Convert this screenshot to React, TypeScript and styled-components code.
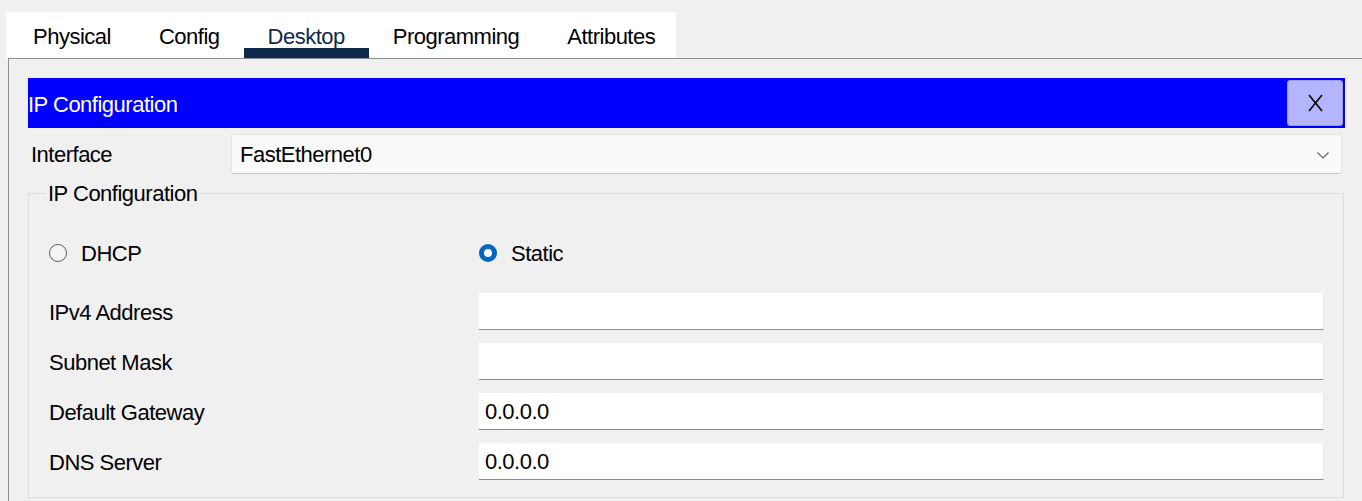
import React from 'react';
import styled, { createGlobalStyle } from 'styled-components';

const GlobalStyle = createGlobalStyle`
    html, body {
        margin: 0;
        padding: 0;
        background: #f0f0f0;
        overflow: hidden;
    }
    body {
        font-family: "Liberation Sans", Arial, sans-serif;
        font-size: 22px;
        letter-spacing: -0.5px;
        color: #000;
    }
`;

const Page = styled.div`
    padding-top: 12px;
    width: 1362px;
    height: 501px;
    box-sizing: border-box;
`;

const TabStrip = styled.div`
    display: flex;
    margin-left: 6px;
    padding-left: 3px;
    width: 667px;
    height: 46px;
    background: #ffffff;
`;

const Tab = styled.div<{ $active?: boolean }>`
    display: flex;
    align-items: center;
    padding: 3px 24px 0;
    height: 100%;
    box-sizing: border-box;
    color: ${(p) => (p.$active ? '#0d2a4c' : '#000')};
    box-shadow: ${(p) => (p.$active ? 'inset 0 -10px 0 #0d2a4c' : 'none')};
    white-space: nowrap;
`;

const Panel = styled.div`
    margin-left: 8px;
    width: 1356px;
    height: 460px;
    box-sizing: border-box;
    border-top: 1px solid #8c8c94;
    border-left: 1px solid #8c8c94;
    padding: 19px 19px 0 19px;
`;

const TitleBar = styled.div`
    display: flex;
    align-items: center;
    justify-content: space-between;
    height: 50px;
    background: #0000ff;
    color: #fff;
    padding: 0 2px 0 0;
`;

const TitleText = styled.span`
    padding-top: 3px;
`;

const CloseButton = styled.div`
    display: flex;
    align-items: center;
    justify-content: center;
    width: 56px;
    height: 46px;
    box-sizing: border-box;
    background: #b4b4ff;
    border: 1px solid #9c9cf0;
    border-radius: 3px;
`;

const InterfaceRow = styled.div`
    display: flex;
    align-items: center;
    margin-top: 6px;
    padding: 0 3px;
`;

const InterfaceLabel = styled.div`
    width: 200px;
    flex-shrink: 0;
    padding-top: 2px;
`;

const Dropdown = styled.div`
    flex: 1;
    display: flex;
    align-items: center;
    justify-content: space-between;
    height: 40px;
    box-sizing: border-box;
    padding: 2px 12px 0 8px;
    background: #fafafa;
    border: 1px solid #e4e4e4;
    border-bottom-color: #c8c8c8;
    border-radius: 2px;
`;

const Group = styled.fieldset`
    margin: 6px 1px 0 0;
    padding: 0 19px 17px 20px;
    border: 1px solid #dcdcdc;
    min-width: 0;
`;

const Legend = styled.legend`
    margin-left: -3px;
    padding: 2px 2px 0;
    line-height: 24px;
`;

const RadioRow = styled.div`
    display: flex;
    align-items: center;
    height: 40px;
    margin-top: 27px;
    margin-bottom: 20px;
`;

const RadioOption = styled.label<{ $width?: number }>`
    display: flex;
    align-items: center;
    gap: 14px;
    padding-top: 2px;
    width: ${(p) => (p.$width ? `${p.$width}px` : 'auto')};
`;

const RadioDot = styled.span<{ $checked?: boolean }>`
    width: 18px;
    height: 18px;
    margin-top: -2px;
    box-sizing: border-box;
    border-radius: 50%;
    border: ${(p) => (p.$checked ? '5px solid #0067c0' : '1px solid #5a5a5a')};
    background: ${(p) => (p.$checked ? '#fff' : '#f5f5f5')};
`;

const FieldList = styled.div`
    display: flex;
    flex-direction: column;
    gap: 13px;
`;

const FieldRow = styled.div`
    display: flex;
    align-items: center;
`;

const FieldLabel = styled.div`
    width: 430px;
    flex-shrink: 0;
    padding-top: 2px;
`;

const TextBox = styled.div`
    flex: 1;
    display: flex;
    align-items: center;
    height: 37px;
    box-sizing: border-box;
    padding: 2px 0 0 6px;
    background: #fff;
    border-right: 1px solid #ececec;
    border-bottom: 1px solid #8a8a8a;
`;

const fields = [
    { label: 'IPv4 Address', value: '' },
    { label: 'Subnet Mask', value: '' },
    { label: 'Default Gateway', value: '0.0.0.0' },
    { label: 'DNS Server', value: '0.0.0.0' },
];

const tabs = ['Physical', 'Config', 'Desktop', 'Programming', 'Attributes'];

const App: React.FC = () => {
    return (
        <Page>
            <GlobalStyle />
            <TabStrip>
                {tabs.map((t) => (
                    <Tab key={t} $active={t === 'Desktop'}>
                        {t}
                    </Tab>
                ))}
            </TabStrip>
            <Panel>
                <TitleBar>
                    <TitleText>IP Configuration</TitleText>
                    <CloseButton>
                        <svg width="15" height="18" viewBox="0 0 15 18">
                            <path d="M1 1 L14 17 M14 1 L1 17" stroke="#000" strokeWidth="1.6" fill="none" />
                        </svg>
                    </CloseButton>
                </TitleBar>
                <InterfaceRow>
                    <InterfaceLabel>Interface</InterfaceLabel>
                    <Dropdown>
                        <span>FastEthernet0</span>
                        <svg width="12" height="7" viewBox="0 0 12 7">
                            <path d="M0.5 0.5 L6 6 L11.5 0.5" stroke="#666" strokeWidth="1.2" fill="none" />
                        </svg>
                    </Dropdown>
                </InterfaceRow>
                <Group>
                    <Legend>IP Configuration</Legend>
                    <RadioRow>
                        <RadioOption $width={430}>
                            <RadioDot />
                            DHCP
                        </RadioOption>
                        <RadioOption>
                            <RadioDot $checked />
                            Static
                        </RadioOption>
                    </RadioRow>
                    <FieldList>
                        {fields.map((f) => (
                            <FieldRow key={f.label}>
                                <FieldLabel>{f.label}</FieldLabel>
                                <TextBox>{f.value}</TextBox>
                            </FieldRow>
                        ))}
                    </FieldList>
                </Group>
            </Panel>
        </Page>
    );
};

export default App;
